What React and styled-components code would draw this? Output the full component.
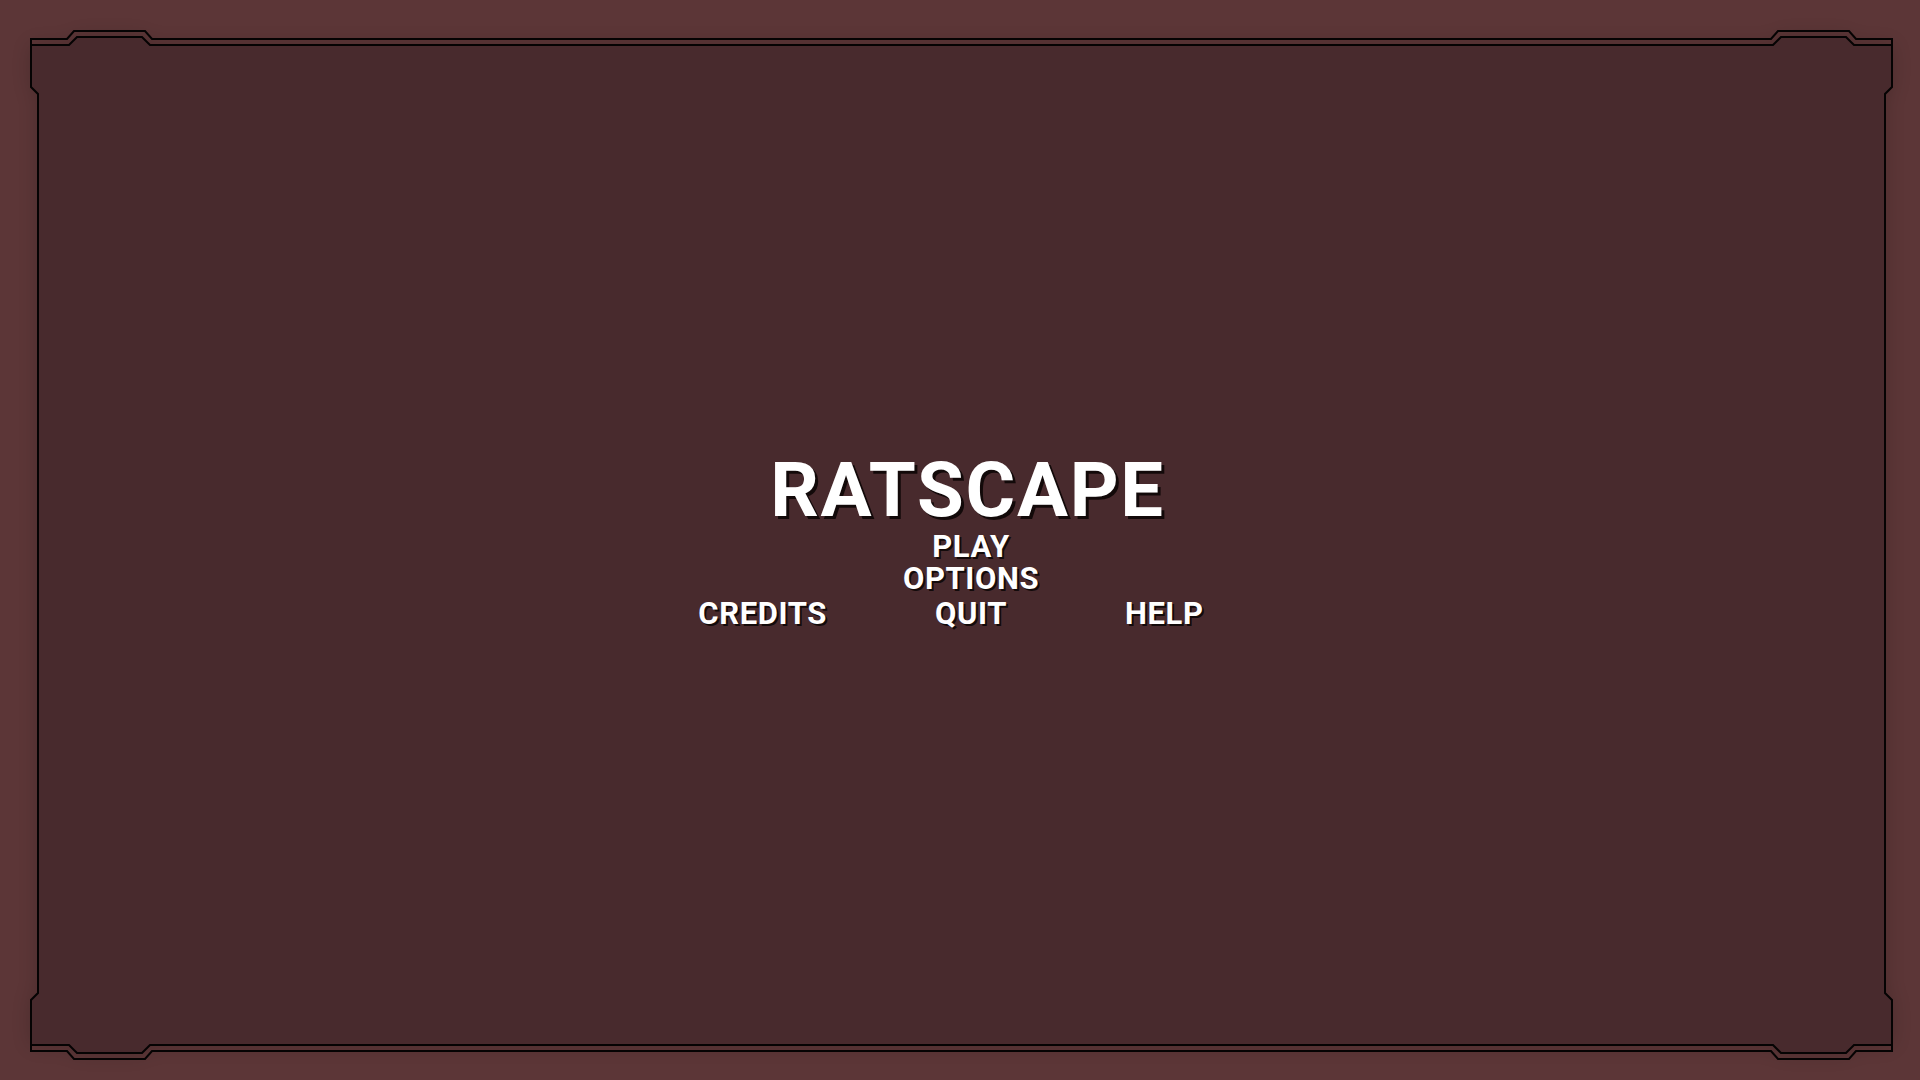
import React from 'react'
import styled, { createGlobalStyle } from 'styled-components'

const GlobalStyle = createGlobalStyle`
  html, body {
    margin: 0;
    padding: 0;
    background: #5c3637;
    font-family: Roboto, "Liberation Sans", sans-serif;
  }
`

const Screen = styled.div`
  position: relative;
  width: 100vw;
  height: 100vh;
  overflow: hidden;
  display: flex;
  align-items: center;
  justify-content: center;
  background: #5c3637;
`

// decorative panel frame, sits behind the menu
const FrameArt = styled.svg`
  position: absolute;
  inset: 0;
  width: 100%;
  height: 100%;
  z-index: 0;
`

const Menu = styled.nav`
  position: relative;
  z-index: 1;
  display: flex;
  flex-direction: column;
  align-items: center;
  padding: 2px 0 0 22px;
`

const Title = styled.h1`
  margin: 0 0 3px;
  padding-right: 7px;
  font-size: 76px;
  line-height: 76px;
  font-weight: 700;
  letter-spacing: 1.7px;
  color: #ffffff;
  text-shadow: 3px 3px 0 rgba(12, 6, 6, 0.9);
`

const Item = styled.button`
  display: block;
  margin: 0;
  padding: 0;
  border: 0;
  background: none;
  cursor: pointer;
  font-family: Roboto, "Liberation Sans", sans-serif;
  font-size: 31px;
  line-height: 32px;
  font-weight: 700;
  letter-spacing: 0.6px;
  color: #ffffff;
  text-shadow: 2px 2px 0 rgba(12, 6, 6, 0.9);
  justify-self: ${p => p.$align || 'center'};
  padding-left: ${p => p.$padLeft || 0}px;
  padding-right: ${p => p.$padRight || 0}px;
`

const BottomRow = styled.div`
  display: grid;
  grid-template-columns: 1fr auto 1fr;
  width: 640px;
  margin-top: 3px;
`

const panelPath =
  'M31,45 L69,45 L77,37 L142,37 L150,45 L1773,45 L1781,37 L1846,37 L1854,45 L1892,45 ' +
  'L1892,87 L1885,94 L1885,993 L1892,1000 L1892,1045 L1854,1045 L1846,1053 L1781,1053 ' +
  'L1773,1045 L150,1045 L142,1053 L77,1053 L69,1045 L31,1045 L31,1000 L38,993 L38,94 L31,87 Z'

const topLine =
  'M31,39 L67,39 L74,31 L145,31 L152,39 L1771,39 L1778,31 L1849,31 L1856,39 L1892,39'
const bottomLine =
  'M31,1051 L67,1051 L74,1059 L145,1059 L152,1051 L1771,1051 L1778,1059 L1849,1059 L1856,1051 L1892,1051'
const sideBits = 'M31,38 L31,46 M31,1044 L31,1052 M1892,38 L1892,46 M1892,1044 L1892,1052'

function Frame() {
  return (
    <FrameArt viewBox="0 0 1920 1080" preserveAspectRatio="none">
      <defs>
        <filter id="soft" x="-5%" y="-5%" width="110%" height="110%">
          <feGaussianBlur stdDeviation="10" />
        </filter>
      </defs>
      <path d={panelPath} fill="#000" opacity="0.18" filter="url(#soft)" />
      <path d={panelPath} fill="#482a2d" stroke="#050303" strokeWidth="2" />
      <path d={topLine} fill="none" stroke="#050303" strokeWidth="2" />
      <path d={bottomLine} fill="none" stroke="#050303" strokeWidth="2" />
      <path d={sideBits} fill="none" stroke="#050303" strokeWidth="2" />
    </FrameArt>
  )
}

function App() {
  return (
    <Screen>
      <GlobalStyle />
      <Frame />
      <Menu>
        <Title>RATSCAPE</Title>
        <Item>PLAY</Item>
        <Item>OPTIONS</Item>
        <BottomRow>
          <Item $align="end" $padRight={108}>CREDITS</Item>
          <Item>QUIT</Item>
          <Item $align="start" $padLeft={118}>HELP</Item>
        </BottomRow>
      </Menu>
    </Screen>
  )
}

export default App
